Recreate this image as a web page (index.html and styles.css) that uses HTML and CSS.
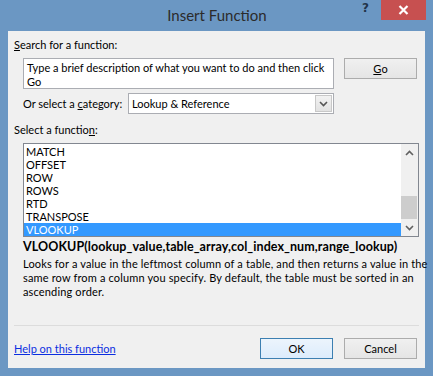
FILE: index.html
```html
<!DOCTYPE html>
<html>
<head>
<meta charset="utf-8">
<link rel="stylesheet" href="styles.css">
</head>
<body>
<div class="window">
  <div class="titlebar">
    <div class="tb-side"></div>
    <div class="title">Insert Function</div>
    <div class="tb-side tb-right">
      <span class="help-q">?</span>
      <span class="close">
        <svg width="11" height="10" viewBox="0 0 11 10"><path d="M1.5 1 L9.5 9 M9.5 1 L1.5 9" stroke="#fff" stroke-width="2.2" fill="none"/></svg>
      </span>
    </div>
  </div>
  <div class="client">
    <div class="label lbl-search"><u>S</u>earch for a function:</div>
    <div class="search-row">
      <div class="searchbox">Type a brief description of what you want to do and then click<br>Go</div>
      <div class="btn btn-go"><u>G</u>o</div>
    </div>
    <div class="cat-row">
      <div class="cat-label">Or select a <u>c</u>ategory:</div>
      <div class="select">
        <div class="select-text">Lookup &amp; Reference</div>
        <div class="select-arrow">
          <svg width="9" height="6" viewBox="0 0 9 6"><path d="M1 1 L4.5 4.5 L8 1" stroke="#555" stroke-width="1.6" fill="none"/></svg>
        </div>
      </div>
    </div>
    <div class="label lbl-func">Select a functio<u>n</u>:</div>
    <div class="listbox">
      <div class="items">
        <div class="item">MATCH</div>
        <div class="item">OFFSET</div>
        <div class="item">ROW</div>
        <div class="item">ROWS</div>
        <div class="item">RTD</div>
        <div class="item">TRANSPOSE</div>
        <div class="item selected">VLOOKUP</div>
      </div>
      <div class="scrollbar">
        <div class="sb-arrow">
          <svg width="9" height="6" viewBox="0 0 9 6"><path d="M1 5 L4.5 1.5 L8 5" stroke="#606060" stroke-width="1.6" fill="none"/></svg>
        </div>
        <div class="sb-track"><div class="sb-thumb"></div></div>
        <div class="sb-arrow">
          <svg width="9" height="6" viewBox="0 0 9 6"><path d="M1 1 L4.5 4.5 L8 1" stroke="#606060" stroke-width="1.6" fill="none"/></svg>
        </div>
      </div>
    </div>
    <div class="signature">VLOOKUP(lookup_value,table_array,col_index_num,range_lookup)</div>
    <div class="desc">Looks for a value in the leftmost column of a table, and then returns a value in the<br>same row from a column you specify. By default, the table must be sorted in an<br>ascending order.</div>
    <div class="separator"></div>
    <div class="footer">
      <a class="helplink" href="#">Help on this function</a>
      <div class="footer-btns">
        <div class="btn btn-ok">OK</div>
        <div class="btn btn-cancel">Cancel</div>
      </div>
    </div>
  </div>
</div>
</body>
</html>
```

FILE: styles.css
```css
* { box-sizing: border-box; }
html, body { margin: 0; padding: 0; }
body {
  width: 433px;
  height: 376px;
  overflow: hidden;
  font-family: "Lato", "Open Sans", sans-serif;
  font-size: 11px;
  color: #000;
}
.window {
  width: 433px;
  height: 376px;
  background: #6b97c3;
  display: flex;
  flex-direction: column;
}
.titlebar {
  height: 31px;
  display: grid;
  grid-template-columns: 1fr auto 1fr;
  align-items: start;
}
.title {
  font-size: 15px;
  color: #2b2b2b;
  line-height: 31px;
  padding-left: 1px;
}
.tb-right {
  display: flex;
  justify-content: flex-end;
  align-items: flex-start;
  padding-right: 7px;
}
.help-q {
  font-family: "DejaVu Sans", sans-serif;
  font-weight: bold;
  font-size: 12px;
  color: #22344a;
  line-height: 20px;
  margin-right: 12px;
  margin-top: -2px;
}
.close {
  width: 45px;
  height: 20px;
  background: #c75050;
  display: flex;
  align-items: center;
  justify-content: center;
}
.client {
  margin: 0 8px 8px 8px;
  height: 337px;
  background: #f0f0f0;
  display: flex;
  flex-direction: column;
}
.label {
  line-height: 16px;
  padding-left: 6px;
  white-space: nowrap;
}
.lbl-search { margin-top: 6px; }
.search-row {
  display: flex;
  margin-top: 5px;
  padding-left: 15px;
  gap: 10px;
  align-items: flex-start;
}
.searchbox {
  width: 311px;
  height: 31px;
  background: #fff;
  border: 1px solid #abadb3;
  padding: 2px 4px 0 3px;
  line-height: 14px;
  white-space: nowrap;
  overflow: hidden;
}
.btn {
  height: 21px;
  width: 73px;
  border: 1px solid #acacac;
  background: linear-gradient(#f0f0f0, #e5e5e5);
  display: flex;
  align-items: center;
  justify-content: center;
  line-height: 14px;
}
.cat-row {
  display: flex;
  align-items: center;
  margin-top: 4px;
  padding-left: 15px;
}
.cat-label {
  width: 105px;
  white-space: nowrap;
}
.select {
  width: 206px;
  height: 21px;
  background: #fff;
  border: 1px solid #abadb3;
  display: flex;
}
.select-text {
  flex: 1;
  padding-left: 3px;
  line-height: 19px;
}
.select-arrow {
  width: 17px;
  margin: 1px;
  background: linear-gradient(#f2f2f2, #e2e2e2);
  border: 1px solid #c8c8c8;
  display: flex;
  align-items: center;
  justify-content: center;
}
.lbl-func { margin-top: 8px; }
.listbox {
  margin-top: 5px;
  margin-left: 15px;
  width: 396px;
  height: 94px;
  border: 1px solid #828790;
  background: #fff;
  display: flex;
  overflow: hidden;
}
.items {
  flex: 1;
  padding-top: 1px;
}
.item {
  height: 13px;
  line-height: 13px;
  padding-left: 2px;
}
.item.selected {
  background: #3399ff;
  color: #fff;
}
.scrollbar {
  width: 17px;
  background: #f0f0f0;
  display: flex;
  flex-direction: column;
}
.sb-arrow {
  height: 17px;
  display: flex;
  align-items: center;
  justify-content: center;
}
.sb-track {
  flex: 1;
  display: flex;
  flex-direction: column;
  justify-content: flex-end;
  padding: 0 1px 0 0;
}
.sb-thumb {
  height: 23px;
  background: #cdcdcd;
}
.signature {
  margin-top: 2px;
  padding-left: 15px;
  font-weight: bold;
  font-size: 12.5px;
  letter-spacing: 0.08px;
  line-height: 16px;
  white-space: nowrap;
}
.desc {
  margin-top: 2px;
  padding-left: 15px;
  line-height: 14px;
  letter-spacing: 0.15px;
  white-space: nowrap;
}
.separator {
  margin-top: 26px;
  margin-left: 6px;
  width: 405px;
  height: 1px;
  background: #dcdcdc;
}
.footer {
  margin-top: 12px;
  padding: 0 8px 0 6px;
  display: flex;
  align-items: center;
  justify-content: space-between;
}
.helplink {
  color: #0b2ee0;
  text-decoration: underline;
}
.footer-btns {
  display: flex;
  gap: 11px;
}
.btn-ok {
  border-color: #3c7fb1;
  background: linear-gradient(#ecf4fc, #dcecfc);
}
```
